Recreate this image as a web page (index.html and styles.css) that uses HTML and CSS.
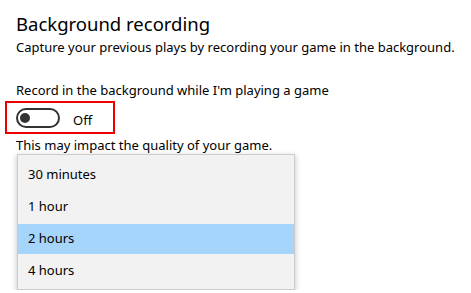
FILE: index.html
```html
<!DOCTYPE html>
<html>
<head>
  <title>Background recording</title>
  <link rel="stylesheet" href="styles.css">
</head>
<body>
  <div class="page">
    <h2 class="title">Background recording</h2>
    <p class="desc">Capture your previous plays by recording your game in the background.</p>

    <p class="label">Record in the background while I'm playing a game</p>
    <div class="toggle-row">
      <span class="toggle"><span class="knob"></span></span>
      <span class="state">Off</span>
    </div>
    <p class="note">This may impact the quality of your game.</p>

    <ul class="dropdown">
      <li class="item">30 minutes</li>
      <li class="item">1 hour</li>
      <li class="item selected">2 hours</li>
      <li class="item">4 hours</li>
    </ul>
  </div>
</body>
</html>
```

FILE: styles.css
```css
body {
  margin: 0;
  background-color: #fff;
  font-family: "Noto Sans", Arial, sans-serif;
  color: #000;
  overflow: hidden;
}

.page {
  padding: 11px 0 0 16px;
}

.title {
  margin: 0;
  font-size: 18.5px;
  font-weight: normal;
  line-height: 26px;
}

.desc {
  margin: 0;
  font-size: 13px;
  line-height: 20px;
  white-space: nowrap;
}

.label {
  margin: 23px 0 0 0;
  font-size: 13px;
  line-height: 20px;
}

.toggle-row {
  display: flex;
  align-items: center;
  margin: 1px 0 0 -11px;
  width: 97px;
  height: 29px;
  border: 2px solid #e00;
  padding-left: 9px;
}

.toggle {
  display: flex;
  align-items: center;
  box-sizing: border-box;
  width: 44px;
  height: 20px;
  border: 2px solid #333;
  border-radius: 10px;
}

.knob {
  width: 10px;
  height: 10px;
  margin-left: 2px;
  border-radius: 50%;
  background-color: #333;
}

.state {
  margin-left: 13px;
  padding-top: 5px;
  font-size: 13px;
}

.note {
  margin: 1px 0 0 0;
  font-size: 13px;
  line-height: 20px;
}

.dropdown {
  list-style: none;
  margin: -1px 0 0 1px;
  padding: 3px 0;
  width: 276px;
  background-color: #f2f2f2;
  border: 1px solid #ccc;
  box-shadow: 0 2px 6px rgba(0, 0, 0, 0.25);
}

.item {
  height: 32px;
  line-height: 32px;
  padding-left: 10px;
  font-size: 13px;
}

.item.selected {
  background-color: #a6d5fc;
  box-shadow: inset 0 2px 0 #f2f2f2;
}
```
